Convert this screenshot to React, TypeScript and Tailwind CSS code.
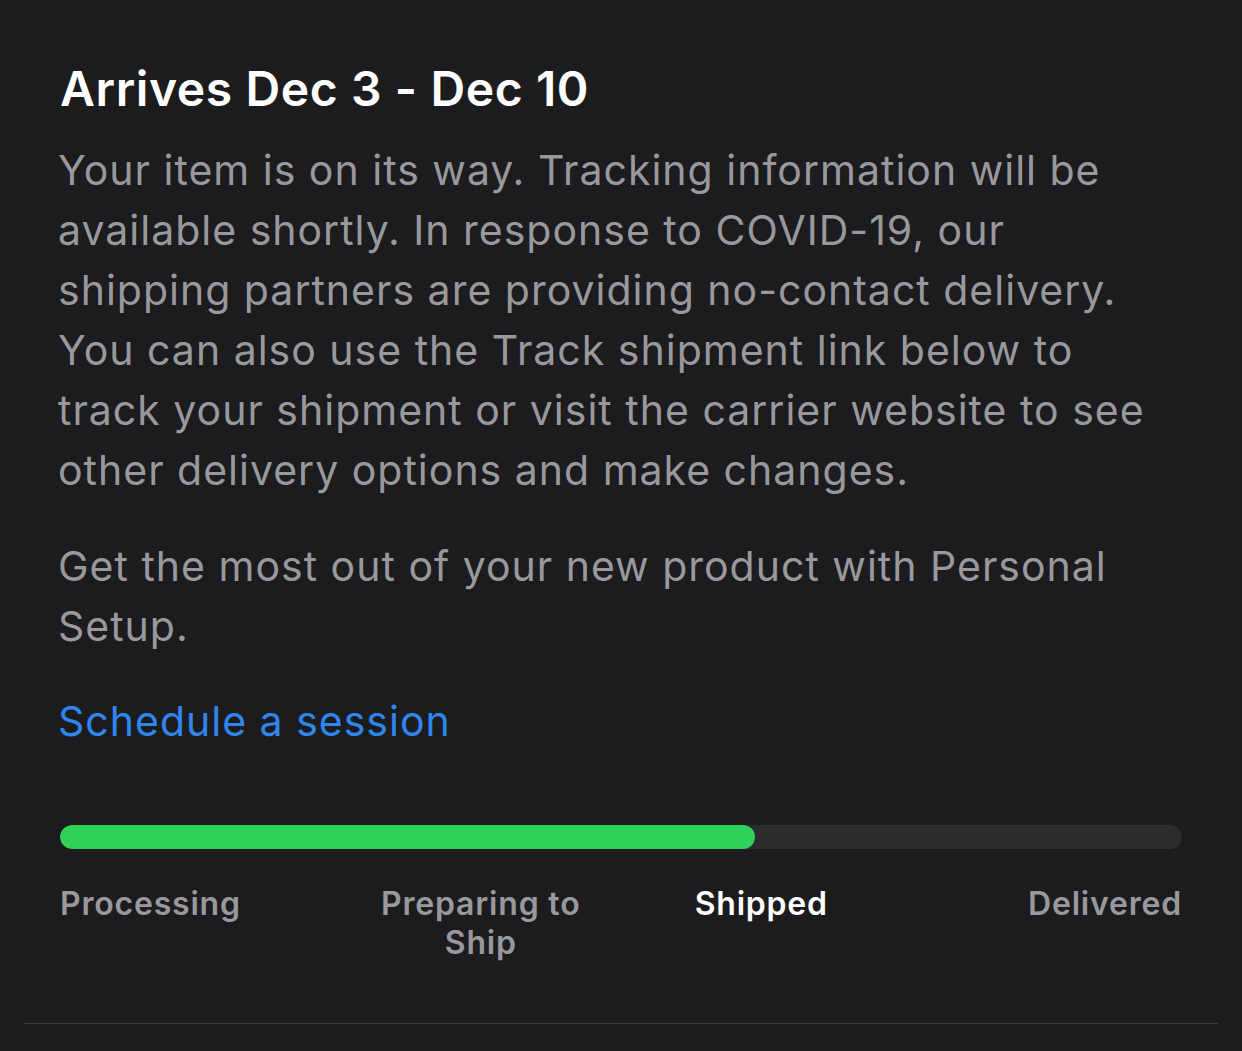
import React from 'react';

const STAGES = ['Processing', 'Preparing to Ship', 'Shipped', 'Delivered'];
const CURRENT = 2;

export default function App() {
  const progress = 61.9;

  return (
    <div className="min-h-[1051px] w-full bg-[#1c1c1e] font-['Inter','Noto_Sans',sans-serif]">
      <div className="px-[24px]">
        <div className="px-[36px] pt-[58px] pb-[61px] border-b border-[#3a3a3c]">
          <h1 className="text-[48px] leading-[62px] font-semibold text-white tracking-[0.6px]">
            Arrives Dec 3 - Dec 10
          </h1>
          <p className="mt-[20px] -ml-[2px] text-[41px] leading-[60px] text-[#98989d] tracking-[1px]">
            Your item is on its way. Tracking information will be available shortly. In response to COVID-19, our
            shipping partners are providing no-contact delivery. You can also use the Track shipment link below to
            track your shipment or visit the carrier website to see other delivery options and make changes.
          </p>
          <p className="mt-[36px] -ml-[2px] text-[41px] leading-[60px] text-[#98989d] tracking-[1px]">
            Get the most out of your new product with Personal Setup.
          </p>
          <a className="block mt-[35px] -ml-[2px] text-[41px] leading-[60px] text-[#2f86ee] tracking-[1px]">
            Schedule a session
          </a>

          <div className="mt-[74px] h-[24px] w-full rounded-full bg-[#2c2c2e] overflow-hidden">
            <div className="h-full rounded-full bg-[#30d158]" style={{ width: `${progress}%` }} />
          </div>

          <div className="mt-[35px] grid grid-cols-4 text-[32px] leading-[39px] font-semibold tracking-[0.8px]">
            {STAGES.map((s, i) => (
              <div
                key={s}
                className={`${i === 0 ? 'text-left' : i === STAGES.length - 1 ? 'text-right' : 'text-center px-[20px]'} ${
                  i === CURRENT ? 'text-white' : 'text-[#98989d]'
                }`}
              >
                {s}
              </div>
            ))}
          </div>
        </div>
      </div>
    </div>
  );
}
